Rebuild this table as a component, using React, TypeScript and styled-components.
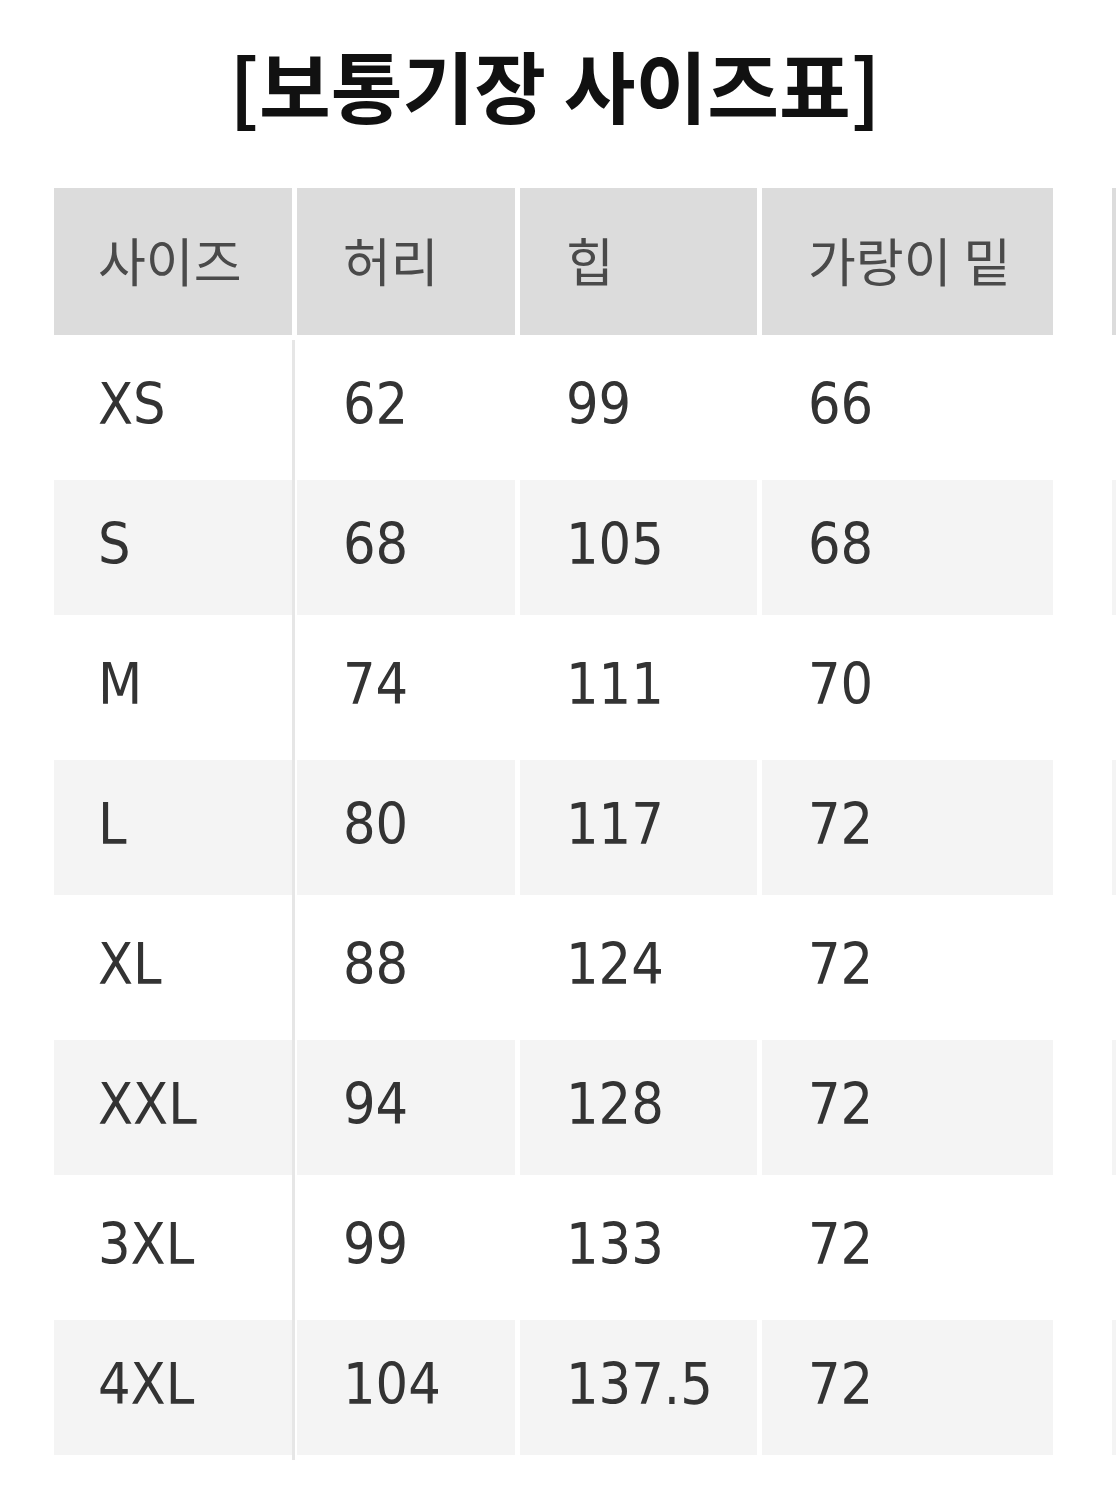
import React from 'react';
import styled, { createGlobalStyle } from 'styled-components';

const GlobalStyle = createGlobalStyle`
  html, body {
    margin: 0;
    padding: 0;
    background: #ffffff;
    overflow-x: hidden;
  }
`;

const Page = styled.div`
  width: 1116px;
  min-height: 1500px;
  overflow: hidden;
  background: #fff;
  font-family: "DejaVu Sans Condensed", "DejaVu Sans", "Noto Sans CJK KR", sans-serif;
`;

const Title = styled.h1`
  margin: 0;
  padding-top: 32px;
  height: 150px;
  box-sizing: border-box;
  text-align: center;
  font-family: "Noto Sans CJK KR", sans-serif;
  font-weight: 700;
  font-size: 78px;
  line-height: 104px;
  color: #111;
  padding-right: 6px;
`;

const TableArea = styled.div`
  display: flex;
  gap: 59px;
  padding-left: 54px;
  margin-top: 38px;
`;

const Grid = styled.div<{ cols: string }>`
  display: grid;
  grid-template-columns: ${(p) => p.cols};
  column-gap: 5px;
  row-gap: 5px;
  flex-shrink: 0;
`;

const Cell = styled.div<{ head?: boolean; shade?: boolean; first?: boolean }>`
  height: ${(p) => (p.head ? '147px' : '135px')};
  background: ${(p) => (p.head ? '#dcdcdc' : p.shade ? '#f4f4f4' : '#ffffff')};
  display: flex;
  align-items: center;
  padding-left: ${(p) => (p.first ? '44px' : '46px')};
  padding-bottom: ${(p) => (p.head ? '4px' : '8px')};
  box-sizing: border-box;
  color: ${(p) => (p.head ? '#4a4a4a' : '#333333')};
  font-family: ${(p) =>
    p.head
      ? '"Noto Sans CJK KR", sans-serif'
      : '"DejaVu Sans Condensed", "DejaVu Sans", sans-serif'};
  font-size: ${(p) => (p.head ? '52px' : '57px')};
  font-weight: 400;
  white-space: nowrap;
  position: relative;
  ${(p) =>
    p.first && !p.head
      ? `&::after {
    content: '';
    position: absolute;
    top: 0;
    bottom: -5px;
    right: -3px;
    width: 3px;
    background: #e6e6e6;
  }`
      : ''}
`;

const headers = ['사이즈', '허리', '힙', '가랑이 밑'];

const rows: string[][] = [
  ['XS', '62', '99', '66'],
  ['S', '68', '105', '68'],
  ['M', '74', '111', '70'],
  ['L', '80', '117', '72'],
  ['XL', '88', '124', '72'],
  ['XXL', '94', '128', '72'],
  ['3XL', '99', '133', '72'],
  ['4XL', '104', '137.5', '72'],
];

export default function App() {
  return (
    <Page>
      <GlobalStyle />
      <Title>[보통기장 사이즈표]</Title>
      <TableArea>
        <Grid cols="238px 218px 237px 291px">
          {headers.map((h, i) => (
            <Cell key={h} head first={i === 0}>
              {h}
            </Cell>
          ))}
          {rows.map((r, ri) =>
            r.map((v, ci) => (
              <Cell key={ri + '-' + ci} shade={ri % 2 === 1} first={ci === 0}>
                {v}
              </Cell>
            ))
          )}
        </Grid>
        <Grid cols="200px">
          <Cell head />
          {rows.map((_, ri) => (
            <Cell key={ri} shade={ri % 2 === 1} />
          ))}
        </Grid>
      </TableArea>
    </Page>
  );
}
